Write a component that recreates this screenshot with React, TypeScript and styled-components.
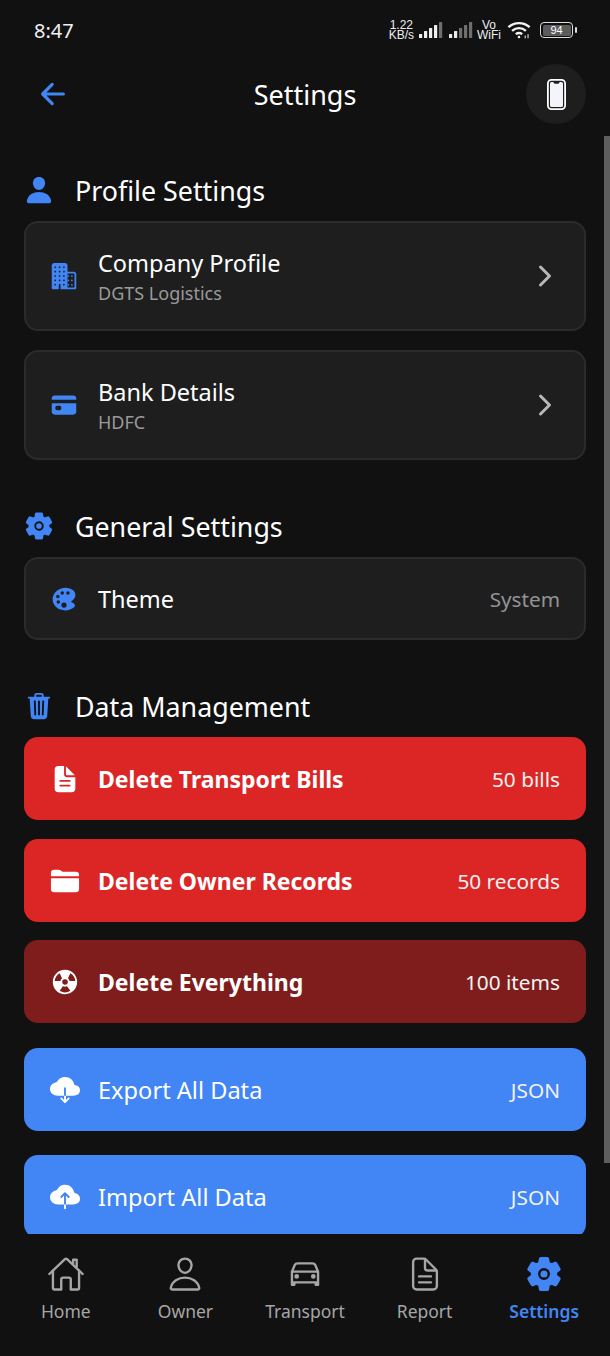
import React from "react"
import styled, { createGlobalStyle } from "styled-components"
import {
  IoArrowBack,
  IoBusiness,
  IoCard,
  IoCarOutline,
  IoChevronForward,
  IoCloudDownload,
  IoCloudUpload,
  IoColorPalette,
  IoDocumentText,
  IoDocumentTextOutline,
  IoFolder,
  IoHomeOutline,
  IoNuclear,
  IoPerson,
  IoPersonOutline,
  IoSettings,
  IoTrash,
} from "react-icons/io5"

const BLUE = "#4285f4"

const GlobalStyle = createGlobalStyle`
  html, body { margin: 0; padding: 0; background: #111112; }
  * { box-sizing: border-box; }
  body { font-family: "Noto Sans", "Liberation Sans", sans-serif; color: #fff; }
`

const Screen = styled.div`
  position: relative;
  width: 610px;
  height: 1356px;
  display: flex;
  flex-direction: column;
  background: #111112;
  overflow: hidden;
`

const StatusBar = styled.div`
  height: 56px;
  flex: none;
  display: flex;
  align-items: center;
  justify-content: space-between;
  padding: 4px 33px 0 34px;
`

const Clock = styled.span`
  font-size: 20px;
  font-weight: 400;
  color: #f0f0f0;
`

const StatusIcons = styled.div`
  display: flex;
  align-items: center;
  color: #eee;
`

const TinyStack = styled.span<{ $gap: number }>`
  display: flex;
  flex-direction: column;
  align-items: center;
  margin-right: ${(p) => p.$gap}px;
  font-family: "Liberation Sans", sans-serif;
  font-size: 12px;
  line-height: 10.5px;
`

const SignalGroup = styled.span<{ $gap: number }>`
  display: flex;
  margin-right: ${(p) => p.$gap}px;
`

const Battery = styled.span`
  width: 33px;
  height: 16px;
  margin-left: 9px;
  border: 1.5px solid #ddd;
  border-radius: 4px;
  padding: 1.5px;
  display: flex;
`

const BatteryFill = styled.span`
  flex: 1;
  background: #5c5c5c;
  border-radius: 1.5px;
  font-family: "Liberation Sans", sans-serif;
  font-size: 11px;
  line-height: 10px;
  text-align: center;
  color: #fff;
`

const BatteryTip = styled.span`
  width: 2px;
  height: 6px;
  background: #ddd;
  border-radius: 1px;
  margin-left: 2px;
`

const Header = styled.header`
  height: 76px;
  flex: none;
  display: grid;
  grid-template-columns: 60px 1fr 60px;
  align-items: center;
  padding: 0 24px;
`

const BackButton = styled.span`
  display: flex;
  padding-left: 12px;
  color: ${BLUE};
`

const Title = styled.h1`
  margin: 0;
  text-align: center;
  font-size: 27px;
  font-weight: 400;
`

const RoundButton = styled.span`
  width: 60px;
  height: 60px;
  border-radius: 50%;
  background: #1e1e1f;
  display: flex;
  align-items: center;
  justify-content: center;
`

const Content = styled.main`
  flex: 1;
  min-height: 0;
  overflow: hidden;
  padding: 37px 24px 0;
`

const SectionHead = styled.div`
  height: 42px;
  display: flex;
  align-items: center;
  margin-bottom: 10px;
  font-size: 26.8px;
  color: #fff;
`

const SectionIcon = styled.span`
  width: 51px;
  flex: none;
  display: flex;
  color: ${BLUE};
`

const Section = styled.section`
  margin-bottom: 45px;
`

const Card = styled.div<{ $height: number }>`
  height: ${(p) => p.$height}px;
  display: flex;
  align-items: center;
  padding: 0 24px;
  background: #1e1e1f;
  border: 2px solid #2b2b2c;
  border-radius: 14px;
  & + & { margin-top: 19px; }
`

const RowIcon = styled.span`
  width: 48px;
  flex: none;
  display: flex;
  color: ${BLUE};
`

const RowText = styled.div`
  flex: 1;
  display: flex;
  flex-direction: column;
  gap: 2px;
`

const RowTitle = styled.span`
  font-size: 23.5px;
  line-height: 32px;
`

const RowSub = styled.span`
  font-size: 18px;
  line-height: 24px;
  color: #9a9a9a;
`

const RowValue = styled.span`
  font-size: 20.7px;
  color: #939393;
`

const Chevron = styled.span`
  display: flex;
  margin-right: -1px;
  color: #b8b8b8;
`

const ActionList = styled.div`
  display: flex;
  flex-direction: column;
`

const Action = styled.div<{ $bg: string; $gap: number }>`
  flex: none;
  height: 83px;
  margin-bottom: ${(p) => p.$gap}px;
  display: flex;
  align-items: center;
  padding: 0 26px;
  background: ${(p) => p.$bg};
  border-radius: 14px;
  color: #fff;
`

const ActionIcon = styled.span`
  width: 48px;
  flex: none;
  display: flex;
`

const ActionLabel = styled.span<{ $bold?: boolean }>`
  flex: 1;
  font-size: ${(p) => (p.$bold ? 23 : 23.6)}px;
  font-weight: ${(p) => (p.$bold ? 700 : 400)};
`

const ActionValue = styled.span`
  font-size: 20.8px;
  color: #f2f2f2;
`

const BottomNav = styled.nav`
  height: 122px;
  flex: none;
  display: grid;
  grid-template-columns: repeat(5, 1fr);
  padding: 21px 6px 0;
  align-items: start;
`

const NavItem = styled.div<{ $active?: boolean }>`
  display: flex;
  flex-direction: column;
  align-items: center;
  gap: 6px;
  font-size: 17.5px;
  line-height: 24px;
  font-weight: ${(p) => (p.$active ? 600 : 400)};
  color: ${(p) => (p.$active ? BLUE : "#a6a6a6")};
`

const ScrollThumb = styled.div`
  position: absolute;
  top: 136px;
  right: 0;
  width: 6px;
  height: 1027px;
  background: #5e5e5e;
`

const BAR_HEIGHTS = [4, 7, 10, 13, 16]

const Bars = ({ lit }: { lit: number }) => (
  <svg width="24" height="18" viewBox="0 0 24 18">
    {BAR_HEIGHTS.map((h, i) => (
      <rect key={h} x={i * 5} y={17 - h} width="3.2" height={h} rx="0.5" fill={i < lit ? "#eee" : "#6e6e6e"} />
    ))}
  </svg>
)

const Wifi = () => (
  <svg width="24" height="20" viewBox="0 0 26 20" fill="none" stroke="#f2f2f2" strokeWidth="2.6">
    <path d="M1.5 7C8 1 18 1 24.5 7" />
    <path d="M5.5 11C10 7 16 7 20.5 11" />
    <path d="M9.5 14.5C11.5 13 14.5 13 16.5 14.5" />
    <circle cx="13" cy="17.5" r="1.4" fill="#f2f2f2" stroke="none" />
    <rect x="19" y="16" width="1.6" height="3" fill="#aaa" stroke="none" />
    <rect x="22" y="14.5" width="1.6" height="4.5" fill="#aaa" stroke="none" />
  </svg>
)

const PhoneIcon = () => (
  <svg width="19" height="31" viewBox="0 0 19 31" fill="none">
    <rect x="0.9" y="0.9" width="17.2" height="29.2" rx="3.6" stroke="#fff" strokeWidth="1.8" />
    <path
      d="M4.500 3h1.300c.5 0 .8.300 1 .8.2.6.6 1 1.200 1h3c.6 0 1-.4 1.200-1 .2-.5.5-.8 1-.8h1.300A1.500 1.500 0 0 1 16 4.500v22a1.500 1.500 0 0 1-1.500 1.500h-10A1.500 1.500 0 0 1 3 26.500v-22A1.500 1.500 0 0 1 4.500 3z"
      fill="#f3f5fb"
    />
  </svg>
)

const NAV = [
  { label: "Home", icon: <IoHomeOutline size={38} /> },
  { label: "Owner", icon: <IoPersonOutline size={38} /> },
  { label: "Transport", icon: <IoCarOutline size={38} /> },
  { label: "Report", icon: <IoDocumentTextOutline size={38} /> },
  { label: "Settings", icon: <IoSettings size={38} />, active: true },
]

export default function App() {
  return (
    <Screen>
      <GlobalStyle />
      <StatusBar>
        <Clock>8:47</Clock>
        <StatusIcons>
          <TinyStack $gap={5}>
            <span>1.22</span>
            <span>KB/s</span>
          </TinyStack>
          <SignalGroup $gap={6}>
            <Bars lit={4} />
          </SignalGroup>
          <SignalGroup $gap={4}>
            <Bars lit={2} />
          </SignalGroup>
          <TinyStack $gap={6}>
            <span>Vo</span>
            <span>WiFi</span>
          </TinyStack>
          <Wifi />
          <Battery>
            <BatteryFill>94</BatteryFill>
          </Battery>
          <BatteryTip />
        </StatusIcons>
      </StatusBar>

      <Header>
        <BackButton>
          <IoArrowBack size={34} />
        </BackButton>
        <Title>Settings</Title>
        <RoundButton>
          <PhoneIcon />
        </RoundButton>
      </Header>

      <Content>
        <Section>
          <SectionHead>
            <SectionIcon>
              <IoPerson size={30} />
            </SectionIcon>
            Profile Settings
          </SectionHead>
          <Card $height={110}>
            <RowIcon>
              <IoBusiness size={28} />
            </RowIcon>
            <RowText>
              <RowTitle>Company Profile</RowTitle>
              <RowSub>DGTS Logistics</RowSub>
            </RowText>
            <Chevron>
              <IoChevronForward size={32} />
            </Chevron>
          </Card>
          <Card $height={110}>
            <RowIcon>
              <IoCard size={28} />
            </RowIcon>
            <RowText>
              <RowTitle>Bank Details</RowTitle>
              <RowSub>HDFC</RowSub>
            </RowText>
            <Chevron>
              <IoChevronForward size={32} />
            </Chevron>
          </Card>
        </Section>

        <Section>
          <SectionHead>
            <SectionIcon>
              <IoSettings size={30} />
            </SectionIcon>
            General Settings
          </SectionHead>
          <Card $height={83}>
            <RowIcon>
              <IoColorPalette size={28} />
            </RowIcon>
            <RowText>
              <RowTitle>Theme</RowTitle>
            </RowText>
            <RowValue>System</RowValue>
          </Card>
        </Section>

        <SectionHead>
          <SectionIcon>
            <IoTrash size={30} />
          </SectionIcon>
          Data Management
        </SectionHead>
        <ActionList>
          <Action $bg="#dc2626" $gap={19}>
            <ActionIcon>
              <IoDocumentText size={30} />
            </ActionIcon>
            <ActionLabel $bold>Delete Transport Bills</ActionLabel>
            <ActionValue>50 bills</ActionValue>
          </Action>
          <Action $bg="#dc2626" $gap={18}>
            <ActionIcon>
              <IoFolder size={30} />
            </ActionIcon>
            <ActionLabel $bold>Delete Owner Records</ActionLabel>
            <ActionValue>50 records</ActionValue>
          </Action>
          <Action $bg="#7f1d1d" $gap={25}>
            <ActionIcon>
              <IoNuclear size={30} />
            </ActionIcon>
            <ActionLabel $bold>Delete Everything</ActionLabel>
            <ActionValue>100 items</ActionValue>
          </Action>
          <Action $bg={BLUE} $gap={24}>
            <ActionIcon>
              <IoCloudDownload size={30} />
            </ActionIcon>
            <ActionLabel>Export All Data</ActionLabel>
            <ActionValue>JSON</ActionValue>
          </Action>
          <Action $bg={BLUE} $gap={0}>
            <ActionIcon>
              <IoCloudUpload size={30} />
            </ActionIcon>
            <ActionLabel>Import All Data</ActionLabel>
            <ActionValue>JSON</ActionValue>
          </Action>
        </ActionList>
      </Content>

      <BottomNav>
        {NAV.map((item) => (
          <NavItem key={item.label} $active={item.active}>
            {item.icon}
            {item.label}
          </NavItem>
        ))}
      </BottomNav>
      <ScrollThumb />
    </Screen>
  )
}
